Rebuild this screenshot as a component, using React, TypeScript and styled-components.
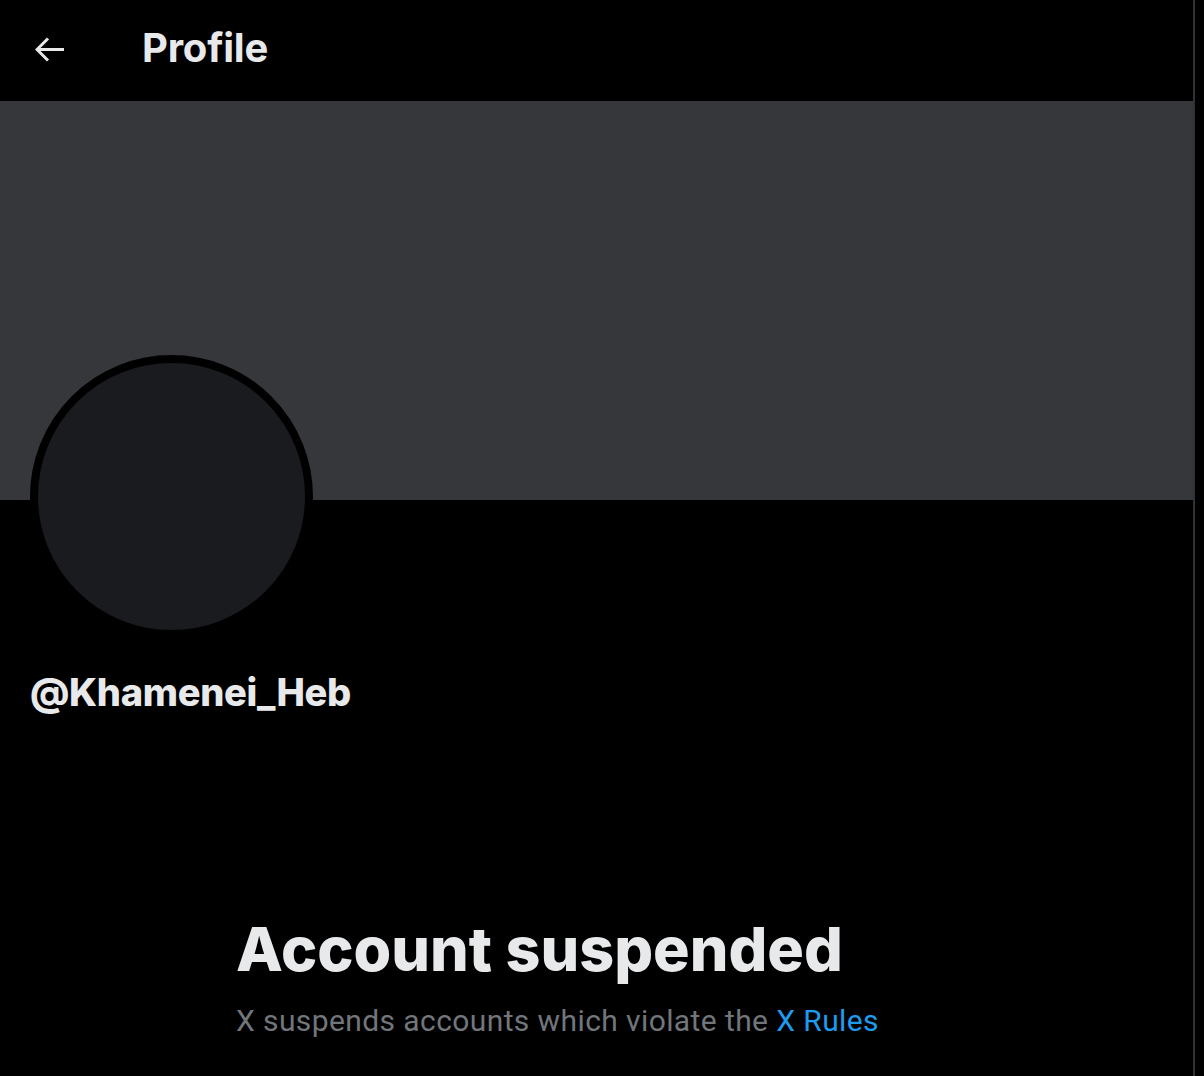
import React from 'react';
import styled, {createGlobalStyle} from 'styled-components';

const GlobalStyle = createGlobalStyle`
    html, body {
        margin: 0;
        padding: 0;
        background: #000000;
    }
    body {
        font-family: Roboto, "Liberation Sans", Arial, sans-serif;
        color: #e7e9ea;
    }
`;

const Page = styled.div`
    display: flex;
    min-height: 1076px;
    background: #000000;
`;

const Column = styled.main`
    width: 1193px;
    border-right: 2px solid #2f3336;
    display: flex;
    flex-direction: column;
`;

const Header = styled.header`
    height: 101px;
    display: flex;
    align-items: center;
    padding-left: 35px;
    gap: 77px;
`;

const BackButton = styled.button`
    display: flex;
    align-items: center;
    justify-content: center;
    padding: 0 0 2px;
    border: none;
    background: transparent;
    color: #e7e9ea;
    cursor: pointer;
`;

const Title = styled.h1`
    margin: 0;
    padding-bottom: 5px;
    font-family: Inter, Roboto, sans-serif;
    font-size: 40px;
    font-weight: 700;
    line-height: 1;
    letter-spacing: -0.2px;
    color: #e7e9ea;
`;

const Banner = styled.div`
    height: 399px;
    background: #36373b;
`;

const ProfileInfo = styled.section`
    padding: 0 30px;
    display: flex;
    flex-direction: column;
`;

const Avatar = styled.div`
    width: 267px;
    height: 267px;
    margin-top: -145px;
    border: 8px solid #000000;
    border-radius: 50%;
    background: #1a1b1f;
`;

const Handle = styled.div`
    margin-top: 31px;
    font-family: Inter, Roboto, sans-serif;
    font-size: 38px;
    font-weight: 800;
    line-height: 47px;
    letter-spacing: -0.3px;
    color: #e7e9ea;
`;

const Notice = styled.section`
    padding: 196px 0 0 236px;
`;

const NoticeTitle = styled.h2`
    margin: 0;
    font-family: Inter, Roboto, sans-serif;
    font-size: 61px;
    font-weight: 800;
    line-height: 74px;
    color: #e7e9ea;
`;

const NoticeText = styled.p`
    margin: 17px 0 0;
    font-size: 30px;
    font-weight: 400;
    line-height: 1.2;
    letter-spacing: 0.4px;
    color: #71767b;
`;

const RulesLink = styled.a`
    color: #1d9bf0;
    text-decoration: none;
`;

function BackArrow() {
    return (
        <svg width="30" height="25" viewBox="0 0 30 25" fill="none">
            <path d="M13 1.5L2 12.5L13 23.5M2.5 12.5H29" stroke="currentColor" strokeWidth="3" strokeLinecap="butt" />
        </svg>
    );
}

export default function App() {
    return (
        <>
            <GlobalStyle />
            <Page>
                <Column>
                    <Header>
                        <BackButton aria-label="Back">
                            <BackArrow />
                        </BackButton>
                        <Title>Profile</Title>
                    </Header>
                    <Banner />
                    <ProfileInfo>
                        <Avatar />
                        <Handle>@Khamenei_Heb</Handle>
                    </ProfileInfo>
                    <Notice>
                        <NoticeTitle>Account suspended</NoticeTitle>
                        <NoticeText>
                            X suspends accounts which violate the <RulesLink href="#">X Rules</RulesLink>
                        </NoticeText>
                    </Notice>
                </Column>
            </Page>
        </>
    );
}
